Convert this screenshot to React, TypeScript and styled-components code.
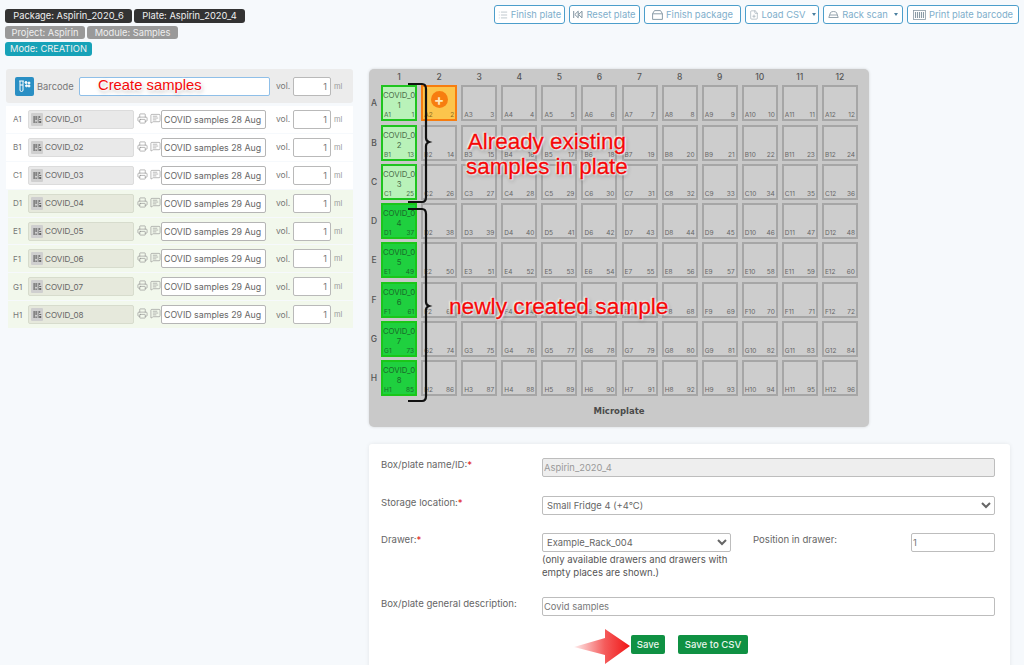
import React from "react";
import styled, { createGlobalStyle } from "styled-components";
import { FilePlus, List, MessageSquareText, Printer } from "lucide-react";

const GlobalStyle = createGlobalStyle`
  html, body {
    margin: 0;
    padding: 0;
    background: #f6f9fc;
    font-family: "Inter", "Open Sans", "Liberation Sans", sans-serif;
  }
  * {
    box-sizing: border-box;
  }
`;

const Page = styled.div`
  position: relative;
  width: 1024px;
  height: 665px;
  overflow: hidden;
  padding: 5px 5px 0 5px;
  background: #f6f9fc;
`;

const Header = styled.header`
  display: flex;
  justify-content: space-between;
  align-items: flex-start;
  height: 64px;
`;

const TagRows = styled.div`
  display: flex;
  flex-direction: column;
  gap: 3px;
  padding-top: 4px;
`;

const TagRow = styled.div`
  display: flex;
  gap: 2px;
`;

const Tag = styled.span<{ $tone: string; $width: number }>`
  display: flex;
  align-items: center;
  justify-content: center;
  width: ${(props) => props.$width}px;
  height: 13.5px;
  border-radius: 3px;
  background: ${(props) => props.$tone};
  color: #efefef;
  font-size: 9.3px;
  white-space: nowrap;
`;

const Toolbar = styled.div`
  display: flex;
  gap: 4px;
`;

const ToolButton = styled.button<{ $width: number }>`
  display: flex;
  align-items: center;
  justify-content: center;
  gap: 3px;
  width: ${(props) => props.$width}px;
  height: 19px;
  padding: 0;
  border: 1px solid #4c9ecb;
  border-radius: 3px;
  background: #ffffff;
  color: #7eaecb;
  font-family: inherit;
  font-size: 9.4px;
  white-space: nowrap;
  svg {
    flex: none;
    color: #8a9aa5;
  }
`;

const Caret = styled.span`
  width: 0;
  height: 0;
  margin-left: 3px;
  border-left: 2.5px solid transparent;
  border-right: 2.5px solid transparent;
  border-top: 3px solid #4a7fa0;
`;

const Main = styled.main`
  display: flex;
  align-items: flex-start;
  gap: 16px;
`;

const LeftColumn = styled.section`
  display: flex;
  flex-direction: column;
  width: 347px;
  margin-left: 1px;
`;

const BarcodeBar = styled.div`
  display: flex;
  align-items: center;
  height: 34px;
  margin-bottom: 3px;
  padding-left: 9px;
  border-radius: 3px;
  background: #ececec;
`;

const BarcodeBadge = styled.span`
  display: flex;
  align-items: center;
  justify-content: center;
  flex: none;
  width: 19px;
  height: 19px;
  border-radius: 2px;
  background: #2a8fc4;
`;

const BarcodeLabel = styled.span`
  width: 45px;
  padding-left: 3px;
  color: #777777;
  font-size: 9.3px;
`;

const BarcodeInput = styled.input`
  width: 191px;
  height: 19px;
  padding: 0 4px;
  border: 1px solid #8fbfe8;
  border-radius: 2px;
  background: #ffffff;
`;

const VolumeLabel = styled.span`
  flex: none;
  width: 17px;
  margin-left: 6px;
  color: #777777;
  font-size: 8.5px;
`;

const VolumeInput = styled.input`
  flex: none;
  width: 38px;
  height: 19px;
  padding: 0 3px;
  border: 1px solid #b9b9b9;
  border-radius: 2px;
  background: #ffffff;
  color: #777777;
  font-family: inherit;
  font-size: 9px;
  text-align: right;
`;

const Unit = styled.span`
  margin-left: 3px;
  color: #999999;
  font-size: 7.5px;
`;

const SampleList = styled.div`
  display: flex;
  flex-direction: column;
  gap: 1px;
`;

const SampleRow = styled.div<{ $fresh: boolean }>`
  display: flex;
  align-items: center;
  height: 26.9px;
  margin-left: ${(props) => (props.$fresh ? "2px" : "0")};
  padding-left: ${(props) => (props.$fresh ? "5px" : "7px")};
  background: ${(props) => (props.$fresh ? "#f2f8ec" : "#ffffff")};
`;

const WellName = styled.span`
  flex: none;
  width: 15px;
  color: #777777;
  font-size: 8px;
`;

const CodeField = styled.div<{ $fresh: boolean }>`
  display: flex;
  align-items: center;
  gap: 2px;
  flex: none;
  width: 106px;
  height: 19px;
  padding-left: 2px;
  border: 1px solid ${(props) => (props.$fresh ? "#d7dccd" : "#dcdcdc")};
  border-radius: 2px;
  background: ${(props) => (props.$fresh ? "#e6e9dc" : "#e9e9e9")};
  color: #666666;
  font-size: 8.1px;
`;

const CodeIcon = styled.span`
  display: flex;
  align-items: center;
  justify-content: center;
  width: 12px;
  height: 13px;
  border-radius: 1px;
  background: #cfcfcf;
`;

const RowActions = styled.div`
  display: flex;
  gap: 2px;
  flex: none;
  width: 24px;
  margin: 0 0 2px 3px;
  color: #8a8a8a;
`;

const NoteInput = styled.input`
  flex: none;
  width: 105px;
  height: 19px;
  margin-right: 4px;
  padding: 0 2px;
  border: 1px solid #b5b5b5;
  border-radius: 2px;
  background: #ffffff;
  color: #666666;
  font-family: inherit;
  font-size: 8.8px;
`;

const RightColumn = styled.section`
  display: flex;
  flex-direction: column;
  gap: 17px;
  width: 641px;
`;

const Plate = styled.div`
  width: 500px;
  height: 358px;
  padding: 3px 2px 0 2px;
  border-radius: 5px;
  background: #c9c9c9;
  box-shadow: 0 0 3px rgba(0, 0, 0, 0.15);
`;

const PlateGrid = styled.div`
  display: grid;
  grid-template-columns: 6px repeat(12, 36px);
  grid-template-rows: 10px repeat(8, 36px);
  column-gap: 4.09px;
  row-gap: 3.3px;
`;

const ColumnHead = styled.span`
  color: #555555;
  font-size: 8.5px;
  font-weight: 500;
  line-height: 10px;
  text-align: center;
`;

const RowHead = styled.span`
  align-self: center;
  justify-self: center;
  color: #555555;
  font-size: 8.5px;
  font-weight: 500;
`;

const wellTones = {
  empty: { bg: "#cdcdcd", border: "#a6a6a6", text: "#666666" },
  existing: { bg: "#b9f2b9", border: "#1fc41f", text: "#4b6f4b" },
  fresh: { bg: "#1fd03f", border: "#1ac61a", text: "#1a6a2a" },
  target: { bg: "#fcc54c", border: "#f77d10", text: "#8a6a20" },
};

type WellKind = keyof typeof wellTones;

const Well = styled.div<{ $kind: WellKind }>`
  position: relative;
  display: flex;
  flex-direction: column;
  align-items: center;
  padding-top: 3px;
  border: 2px solid ${(props) => wellTones[props.$kind].border};
  background: ${(props) => wellTones[props.$kind].bg};
  color: ${(props) => wellTones[props.$kind].text};
`;

const WellText = styled.span`
  font-size: 7.8px;
  line-height: 10px;
  text-align: center;
  white-space: nowrap;
`;

const WellFooter = styled.div`
  display: flex;
  justify-content: space-between;
  width: 100%;
  margin-top: auto;
  padding: 0 1px 0 1px;
  font-size: 6.5px;
  line-height: 8px;
`;

const AddBadge = styled.span`
  display: flex;
  align-items: center;
  justify-content: center;
  width: 17px;
  height: 17px;
  margin-top: 1px;
  border-radius: 50%;
  background: #f77d10;
  color: #ffe7b8;
  font-size: 15px;
  font-weight: 700;
  line-height: 15px;
`;

const PlateTitle = styled.div`
  padding: 10px 0 0 0;
  color: #4a4a4a;
  font-family: "DejaVu Sans", sans-serif;
  font-size: 8.5px;
  font-weight: 700;
  text-align: center;
`;

const FormCard = styled.form`
  display: flex;
  flex-direction: column;
  height: 240px;
  padding: 14px 15px 0 12px;
  border-radius: 3px;
  background: #ffffff;
  box-shadow: 0 0 4px rgba(0, 0, 0, 0.08);
`;

const FormRow = styled.div<{ $gap: number }>`
  display: grid;
  grid-template-columns: 161px 1fr;
  margin-bottom: ${(props) => props.$gap}px;
`;

const FieldLabel = styled.label`
  padding-top: 1px;
  color: #666666;
  font-size: 9.6px;
`;

const Required = styled.span`
  color: #e02020;
`;

const TextField = styled.input`
  width: 100%;
  height: 19px;
  padding: 0 1px;
  border: 1px solid #bdbdbd;
  border-radius: 2px;
  background: #ffffff;
  color: #777777;
  font-family: inherit;
  font-size: 9.4px;
  &:disabled {
    background: #eeeeee;
    color: #999999;
  }
`;

const SelectField = styled.select`
  display: block;
  width: 100%;
  height: 19px;
  padding: 0;
  border: 1px solid #bdbdbd;
  border-radius: 2px;
  background: #ffffff;
  color: #666666;
  font-family: inherit;
  font-size: 9.4px;
`;

const DrawerRow = styled.div`
  display: grid;
  grid-template-columns: 189px 1fr 84px;
  column-gap: 22px;
`;

const PositionLabel = styled.span`
  padding-top: 1px;
  color: #666666;
  font-size: 9.6px;
`;

const Hint = styled.p`
  margin: 1px 0 0 0;
  color: #555555;
  font-size: 9.6px;
  line-height: 13px;
  white-space: nowrap;
`;

const FormActions = styled.div`
  display: flex;
  gap: 13px;
  margin-left: 250px;
`;

const SaveButton = styled.button<{ $width: number }>`
  width: ${(props) => props.$width}px;
  height: 19px;
  padding: 0;
  border: none;
  border-radius: 2px;
  background: #0f9143;
  color: #e8f5ec;
  font-family: inherit;
  font-size: 9.6px;
  font-weight: 500;
  white-space: nowrap;
`;

const Note = styled.span`
  position: absolute;
  color: #f40808;
  font-family: "Liberation Sans", Arial, sans-serif;
  line-height: 1.2;
  white-space: pre;
  -webkit-text-stroke: 0.3px #f40808;
  text-shadow: 0 0 2px #fff, 1px 1px 2px #fff, -1px -1px 2px #fff, 1px 2px 4px rgba(0, 0, 0, 0.35);
`;

const CreateNote = styled(Note)`
  left: 98px;
  top: 77px;
  font-size: 14.8px;
  -webkit-text-stroke: 0;
`;

const ExistingNote = styled(Note)`
  left: 466px;
  top: 129px;
  font-size: 22.4px;
  line-height: 25px;
  text-align: center;
`;

const FreshNote = styled(Note)`
  left: 449px;
  top: 293px;
  font-size: 22.7px;
`;

const Brace = styled.svg<{ $top: number; $height: number }>`
  position: absolute;
  left: 405px;
  top: ${(props) => props.$top}px;
  width: 28px;
  height: ${(props) => props.$height}px;
`;

const SaveArrow = styled.svg`
  position: absolute;
  left: 530px;
  top: 628px;
  width: 101px;
  height: 37px;
`;

const TubesIcon = () => (
  <svg width="15" height="15" viewBox="0 0 15 15" fill="none" stroke="#ffffff" strokeWidth="1">
    <path d="M3 2v9a1.5 1.5 0 0 0 3 0V2M2.2 2h4.6M3 6h3" />
    <circle cx="9" cy="3.5" r="1" fill="#ffffff" />
    <circle cx="12" cy="4" r="1" fill="#ffffff" />
    <circle cx="9.5" cy="6.8" r="1" fill="#ffffff" />
    <circle cx="12" cy="7" r="1" fill="#ffffff" />
  </svg>
);

const BarsIcon = () => (
  <svg width="9" height="9" viewBox="0 0 9 9" fill="#666666">
    <rect x="0.5" y="1" width="1.2" height="7" />
    <rect x="2.5" y="1" width="1.2" height="4" />
    <rect x="2.5" y="6.5" width="1.2" height="1.5" />
    <rect x="4.8" y="1" width="0.7" height="7" />
    <rect x="6.2" y="1" width="1" height="2" />
    <rect x="6.2" y="4" width="2" height="1" />
    <rect x="6.2" y="6" width="2" height="2" />
  </svg>
);

const ResetIcon = () => (
  <svg width="10" height="9" viewBox="0 0 10 9" fill="none" stroke="#7f929f" strokeWidth="1">
    <path d="M0.7 1v7M5.2 1.2 1.8 4.5l3.4 3.3zM9 1.2 5.6 4.5 9 7.8z" />
  </svg>
);

const PackageIcon = () => (
  <svg width="11" height="10" viewBox="0 0 11 10" fill="none" stroke="#7f929f" strokeWidth="0.9">
    <path d="M2.5 0.6h6l1.9 3v5.8H0.6V3.6zM0.6 3.8h9.8" />
  </svg>
);

const RackIcon = () => (
  <svg width="11" height="9" viewBox="0 0 11 9" fill="none" stroke="#8a9aa5" strokeWidth="0.9">
    <path d="M0.8 7.5 L2.5 2.5 C4 1.2 7 1.2 8.5 2.5 L10.2 7.5 Z M1.8 5 H9.2" />
  </svg>
);

const PlateBarcodeIcon = () => (
  <svg width="13" height="10" viewBox="0 0 13 10" fill="none" stroke="#8a9aa5">
    <rect x="0.5" y="0.5" width="12" height="9" strokeWidth="0.8" />
    <path d="M2.5 2v6M4.5 2v6M6.5 2v6M8.5 2v6M10.5 2v6" strokeWidth="1.1" />
  </svg>
);

const tools = [
  { label: "Finish plate", width: 71, icon: <List size={10} strokeWidth={1.3} /> },
  { label: "Reset plate", width: 71, icon: <ResetIcon /> },
  { label: "Finish package", width: 97, icon: <PackageIcon /> },
  { label: "Load CSV", width: 74, icon: <FilePlus size={10} strokeWidth={1.3} />, menu: true },
  { label: "Rack scan", width: 80, icon: <RackIcon />, menu: true },
  { label: "Print plate barcode", width: 112, icon: <PlateBarcodeIcon /> },
];

const rowLetters = ["A", "B", "C", "D", "E", "F", "G", "H"];
const columns = Array.from({ length: 12 }, (_, i) => i + 1);

const wellKind = (row: number, col: number): WellKind => {
  if (col === 1 && row < 3) return "existing";
  if (col === 1) return "fresh";
  if (row === 0 && col === 2) return "target";
  return "empty";
};

const samples = rowLetters.map((letter, i) => ({
  well: `${letter}1`,
  code: `COVID_0${i + 1}`,
  note: i < 3 ? "COVID samples 28 Aug" : "COVID samples 29 Aug",
  fresh: i >= 3,
}));

export default function App() {
  return (
    <Page>
      <GlobalStyle />
      <Header>
        <TagRows>
          <TagRow>
            <Tag $tone="#333333" $width={127}>Package: Aspirin_2020_6</Tag>
            <Tag $tone="#333333" $width={111}>Plate: Aspirin_2020_4</Tag>
          </TagRow>
          <TagRow>
            <Tag $tone="#999999" $width={80}>Project: Aspirin</Tag>
            <Tag $tone="#999999" $width={91}>Module: Samples</Tag>
          </TagRow>
          <TagRow>
            <Tag $tone="#17a2b8" $width={87}>Mode: CREATION</Tag>
          </TagRow>
        </TagRows>
        <Toolbar>
          {tools.map((tool) => (
            <ToolButton key={tool.label} type="button" $width={tool.width}>
              {tool.icon}
              {tool.label}
              {tool.menu && <Caret />}
            </ToolButton>
          ))}
        </Toolbar>
      </Header>
      <Main>
        <LeftColumn>
          <BarcodeBar>
            <BarcodeBadge>
              <TubesIcon />
            </BarcodeBadge>
            <BarcodeLabel>Barcode</BarcodeLabel>
            <BarcodeInput />
            <VolumeLabel>vol.</VolumeLabel>
            <VolumeInput defaultValue="1" />
            <Unit>ml</Unit>
          </BarcodeBar>
          <SampleList>
            {samples.map((sample) => (
              <SampleRow key={sample.well} $fresh={sample.fresh}>
                <WellName>{sample.well}</WellName>
                <CodeField $fresh={sample.fresh}>
                  <CodeIcon>
                    <BarsIcon />
                  </CodeIcon>
                  {sample.code}
                </CodeField>
                <RowActions>
                  <Printer size={11} strokeWidth={1.3} />
                  <MessageSquareText size={11} strokeWidth={1.3} />
                </RowActions>
                <NoteInput defaultValue={sample.note} />
                <VolumeLabel>vol.</VolumeLabel>
                <VolumeInput defaultValue="1" />
                <Unit>ml</Unit>
              </SampleRow>
            ))}
          </SampleList>
        </LeftColumn>
        <RightColumn>
          <Plate>
            <PlateGrid>
              <span />
              {columns.map((col) => (
                <ColumnHead key={col}>{col}</ColumnHead>
              ))}
              {rowLetters.map((letter, row) => (
                <React.Fragment key={letter}>
                  <RowHead>{letter}</RowHead>
                  {columns.map((col) => {
                    const kind = wellKind(row, col);
                    return (
                      <Well key={col} $kind={kind}>
                        {kind === "target" && <AddBadge>+</AddBadge>}
                        {(kind === "existing" || kind === "fresh") && (
                          <WellText>
                            COVID_0
                            <br />
                            {row + 1}
                          </WellText>
                        )}
                        <WellFooter>
                          <span>{`${letter}${col}`}</span>
                          <span>{row * 12 + col}</span>
                        </WellFooter>
                      </Well>
                    );
                  })}
                </React.Fragment>
              ))}
            </PlateGrid>
            <PlateTitle>Microplate</PlateTitle>
          </Plate>
          <FormCard>
            <FormRow $gap={19}>
              <FieldLabel>
                Box/plate name/ID:<Required>*</Required>
              </FieldLabel>
              <TextField disabled defaultValue="Aspirin_2020_4" />
            </FormRow>
            <FormRow $gap={18}>
              <FieldLabel>
                Storage location:<Required>*</Required>
              </FieldLabel>
              <SelectField defaultValue="Small Fridge 4 (+4°C)">
                <option>Small Fridge 4 (+4°C)</option>
              </SelectField>
            </FormRow>
            <FormRow $gap={18}>
              <FieldLabel>
                Drawer:<Required>*</Required>
              </FieldLabel>
              <DrawerRow>
                <div>
                  <SelectField defaultValue="Example_Rack_004">
                    <option>Example_Rack_004</option>
                  </SelectField>
                  <Hint>
                    (only available drawers and drawers with
                    <br />
                    empty places are shown.)
                  </Hint>
                </div>
                <PositionLabel>Position in drawer:</PositionLabel>
                <TextField defaultValue="1" />
              </DrawerRow>
            </FormRow>
            <FormRow $gap={19}>
              <FieldLabel>Box/plate general description:</FieldLabel>
              <TextField defaultValue="Covid samples" />
            </FormRow>
            <FormActions>
              <SaveButton type="button" $width={34}>Save</SaveButton>
              <SaveButton type="button" $width={70}>Save to CSV</SaveButton>
            </FormActions>
          </FormCard>
        </RightColumn>
      </Main>
      <CreateNote>Create samples</CreateNote>
      <ExistingNote>{"Already existing\nsamples in plate"}</ExistingNote>
      <FreshNote>newly created sample</FreshNote>
      <Brace $top={82} $height={124} viewBox="0 0 28 124" fill="none" stroke="#111111" strokeWidth="2.2">
        <path d="M3 2H17Q21 2 21 7V56Q21 59 24 60Q21 61 21 64V115Q21 120 17 120H3" />
      </Brace>
      <Brace $top={207} $height={198} viewBox="0 0 28 198" fill="none" stroke="#111111" strokeWidth="2.2">
        <path d="M3 2H17Q21 2 21 7V95Q21 98 24 99Q21 100 21 103V189Q21 194 17 194H3" />
      </Brace>
      <SaveArrow viewBox="0 0 101 37">
        <defs>
          <linearGradient id="saveArrowFill" x1="0" x2="1" y1="0" y2="0">
            <stop offset="0" stopColor="#f01515" stopOpacity="0.08" />
            <stop offset="0.55" stopColor="#f01515" stopOpacity="0.7" />
            <stop offset="1" stopColor="#f01515" />
          </linearGradient>
        </defs>
        <polygon points="44,19 75,10 75,1 100,18 75,36 75,27" fill="url(#saveArrowFill)" />
      </SaveArrow>
    </Page>
  );
}
